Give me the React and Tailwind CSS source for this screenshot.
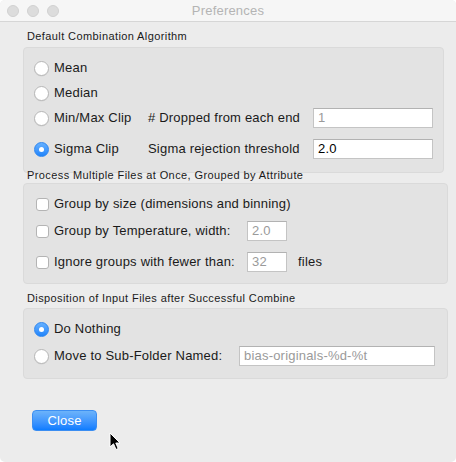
import React from "react";

const font = { fontFamily: '"Liberation Sans", Arial, sans-serif' };

function Radio({ checked }) {
  return checked ? (
    <div className="w-[15px] h-[15px] rounded-full bg-gradient-to-b from-[#66b1ff] to-[#1d84fb] border border-[#2e86f0] flex items-center justify-center shrink-0">
      <div className="w-[5px] h-[5px] rounded-full bg-white" />
    </div>
  ) : (
    <div className="w-[15px] h-[15px] rounded-full bg-white border border-[#b7b7b7] shadow-[0_0.5px_0.5px_rgba(0,0,0,0.08)] shrink-0" />
  );
}

function Check() {
  return <div className="w-[13px] h-[13px] rounded-[3px] bg-white border border-[#b4b4b4] shrink-0" />;
}

function Field({ value, w, muted }) {
  return (
    <div
      className={`h-[20px] ${w} bg-white border border-[#c4c4c4] border-t-[#b2b2b2] flex items-center pl-[4px] text-[13px] ${muted ? "text-[#9a9a9a]" : "text-black"}`}
    >
      {value}
    </div>
  );
}

export default function App() {
  return (
    <div className="w-[456px] h-[462px] bg-white" style={font}>
      <div className="relative w-[456px] h-[462px] bg-[#ececec] rounded-[5px] overflow-hidden flex flex-col">
        <div className="h-[22px] shrink-0 bg-[#f6f6f6] border-b border-[#d6d6d6] flex items-center relative">
          <div className="flex gap-[8px] pl-[7px]">
            <div className="w-[12px] h-[12px] rounded-full bg-[#dcdcdc] border border-[#d0d0d0]" />
            <div className="w-[12px] h-[12px] rounded-full bg-[#dcdcdc] border border-[#d0d0d0]" />
            <div className="w-[12px] h-[12px] rounded-full bg-[#dcdcdc] border border-[#d0d0d0]" />
          </div>
          <div className="absolute inset-0 flex items-center justify-center text-[13px] tracking-[0.2px] text-[#b4b4b4]">
            Preferences
          </div>
        </div>

        <div className="pl-[23px] text-[13px] tracking-[0.2px] text-[#1a1a1a]">
          <div className="mt-[8px] pl-[4px] text-[11px] tracking-[0.4px] leading-[13px] h-[13px]">Default Combination Algorithm</div>
          <div className="mt-[4px] w-[421px] bg-[#e3e3e3] border border-[#dadada] rounded-[4px] pl-[10px] pt-[10px] pb-[13px] flex flex-col">
            <div className="h-[20px] flex items-center gap-[5px]"><Radio /><span>Mean</span></div>
            <div className="mt-[5px] h-[20px] flex items-center gap-[5px]"><Radio /><span>Median</span></div>
            <div className="mt-[5px] h-[20px] flex items-center">
              <div className="w-[114px] flex items-center gap-[5px]"><Radio /><span>Min/Max Clip</span></div>
              <div className="w-[165px]"># Dropped from each end</div>
              <Field value="1" w="w-[120px]" muted />
            </div>
            <div className="mt-[11px] h-[20px] flex items-center">
              <div className="w-[114px] flex items-center gap-[5px]"><Radio checked /><span>Sigma Clip</span></div>
              <div className="w-[165px]">Sigma rejection threshold</div>
              <Field value="2.0" w="w-[120px]" />
            </div>
          </div>

          <div className="mt-[-4px] pl-[4px] text-[11px] tracking-[0.4px] leading-[13px] h-[13px]">Process Multiple Files at Once, Grouped by Attribute</div>
          <div className="mt-[1px] w-[425px] bg-[#e3e3e3] border border-[#dadada] rounded-[4px] pl-[12px] pt-[10px] pb-[11px] flex flex-col">
            <div className="h-[20px] flex items-center gap-[5px]"><Check /><span>Group by size (dimensions and binning)</span></div>
            <div className="mt-[7px] h-[20px] flex items-center">
              <div className="w-[211px] flex items-center gap-[5px]"><Check /><span>Group by Temperature, width:</span></div>
              <Field value="2.0" w="w-[40px]" muted />
            </div>
            <div className="mt-[11px] h-[20px] flex items-center">
              <div className="w-[211px] flex items-center gap-[5px]"><Check /><span>Ignore groups with fewer than:</span></div>
              <Field value="32" w="w-[40px]" muted />
              <span className="ml-[11px]">files</span>
            </div>
          </div>

          <div className="mt-[8px] pl-[4px] text-[11px] tracking-[0.4px] leading-[13px] h-[13px]">Disposition of Input Files after Successful Combine</div>
          <div className="mt-[3px] w-[425px] bg-[#e3e3e3] border border-[#dadada] rounded-[4px] pl-[10px] pt-[10px] pb-[12px] flex flex-col">
            <div className="h-[20px] flex items-center gap-[5px]"><Radio checked /><span>Do Nothing</span></div>
            <div className="mt-[7px] h-[20px] flex items-center">
              <div className="w-[205px] flex items-center gap-[5px]"><Radio /><span>Move to Sub-Folder Named:</span></div>
              <Field value="bias-originals-%d-%t" w="w-[196px]" muted />
            </div>
          </div>

          <div className="mt-[31px] ml-[9px] w-[65px] h-[21px] rounded-[4px] bg-gradient-to-b from-[#6cb3fa] to-[#0a7cff] border border-[#3b8ef2] flex items-center justify-center text-white text-[13px]">
            Close
          </div>
        </div>

        <svg className="absolute left-[109px] top-[432px]" width="12" height="19" viewBox="0 0 12 19">
          <path d="M1 1 L1 15 L4.5 11.8 L7 17.5 L9.2 16.5 L6.8 11 L11 11 Z" fill="black" stroke="white" strokeWidth="1" strokeLinejoin="round" />
        </svg>
      </div>
    </div>
  );
}
